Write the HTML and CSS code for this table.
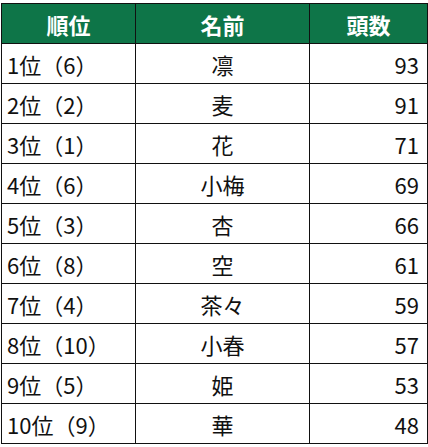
FILE: index.html
```html
<!DOCTYPE html>
<html lang="ja">
<head>
<meta charset="utf-8">
<link rel="stylesheet" href="styles.css">
</head>
<body>
<table class="rank">
  <colgroup>
    <col class="c1"><col class="c2"><col class="c3">
  </colgroup>
  <thead>
    <tr><th>順位</th><th>名前</th><th>頭数</th></tr>
  </thead>
  <tbody>
    <tr><td class="l">1位（6）</td><td class="c">凛</td><td class="r">93</td></tr>
    <tr><td class="l">2位（2）</td><td class="c">麦</td><td class="r">91</td></tr>
    <tr><td class="l">3位（1）</td><td class="c">花</td><td class="r">71</td></tr>
    <tr><td class="l">4位（6）</td><td class="c">小梅</td><td class="r">69</td></tr>
    <tr><td class="l">5位（3）</td><td class="c">杏</td><td class="r">66</td></tr>
    <tr><td class="l">6位（8）</td><td class="c">空</td><td class="r">61</td></tr>
    <tr><td class="l">7位（4）</td><td class="c">茶々</td><td class="r">59</td></tr>
    <tr><td class="l">8位（10）</td><td class="c">小春</td><td class="r">57</td></tr>
    <tr><td class="l">9位（5）</td><td class="c">姫</td><td class="r">53</td></tr>
    <tr><td class="l">10位（9）</td><td class="c">華</td><td class="r">48</td></tr>
  </tbody>
</table>
</body>
</html>
```
FILE: styles.css
```css
html, body {
  margin: 0;
  padding: 0;
  background: #ffffff;
}
body {
  padding: 3px 0 0 1px;
  font-family: "Noto Sans CJK JP", "Noto Sans", sans-serif;
}
.rank {
  border-collapse: collapse;
  table-layout: fixed;
  width: 426px;
  font-size: 22px;
  color: #111111;
}
.c1 { width: 134px; }
.c2 { width: 174px; }
.c3 { width: 118px; }
.rank th, .rank td {
  border: 1px solid #111111;
  height: 39px;
  padding: 0;
  line-height: 1;
  white-space: nowrap;
}
.rank th {
  background: #0e7548;
  color: #ffffff;
  font-weight: 700;
  text-align: center;
}
.rank td.l { text-align: left; padding-left: 5px; }
.rank td.c { text-align: center; }
.rank td.r { text-align: right; padding-right: 8px; }
```
